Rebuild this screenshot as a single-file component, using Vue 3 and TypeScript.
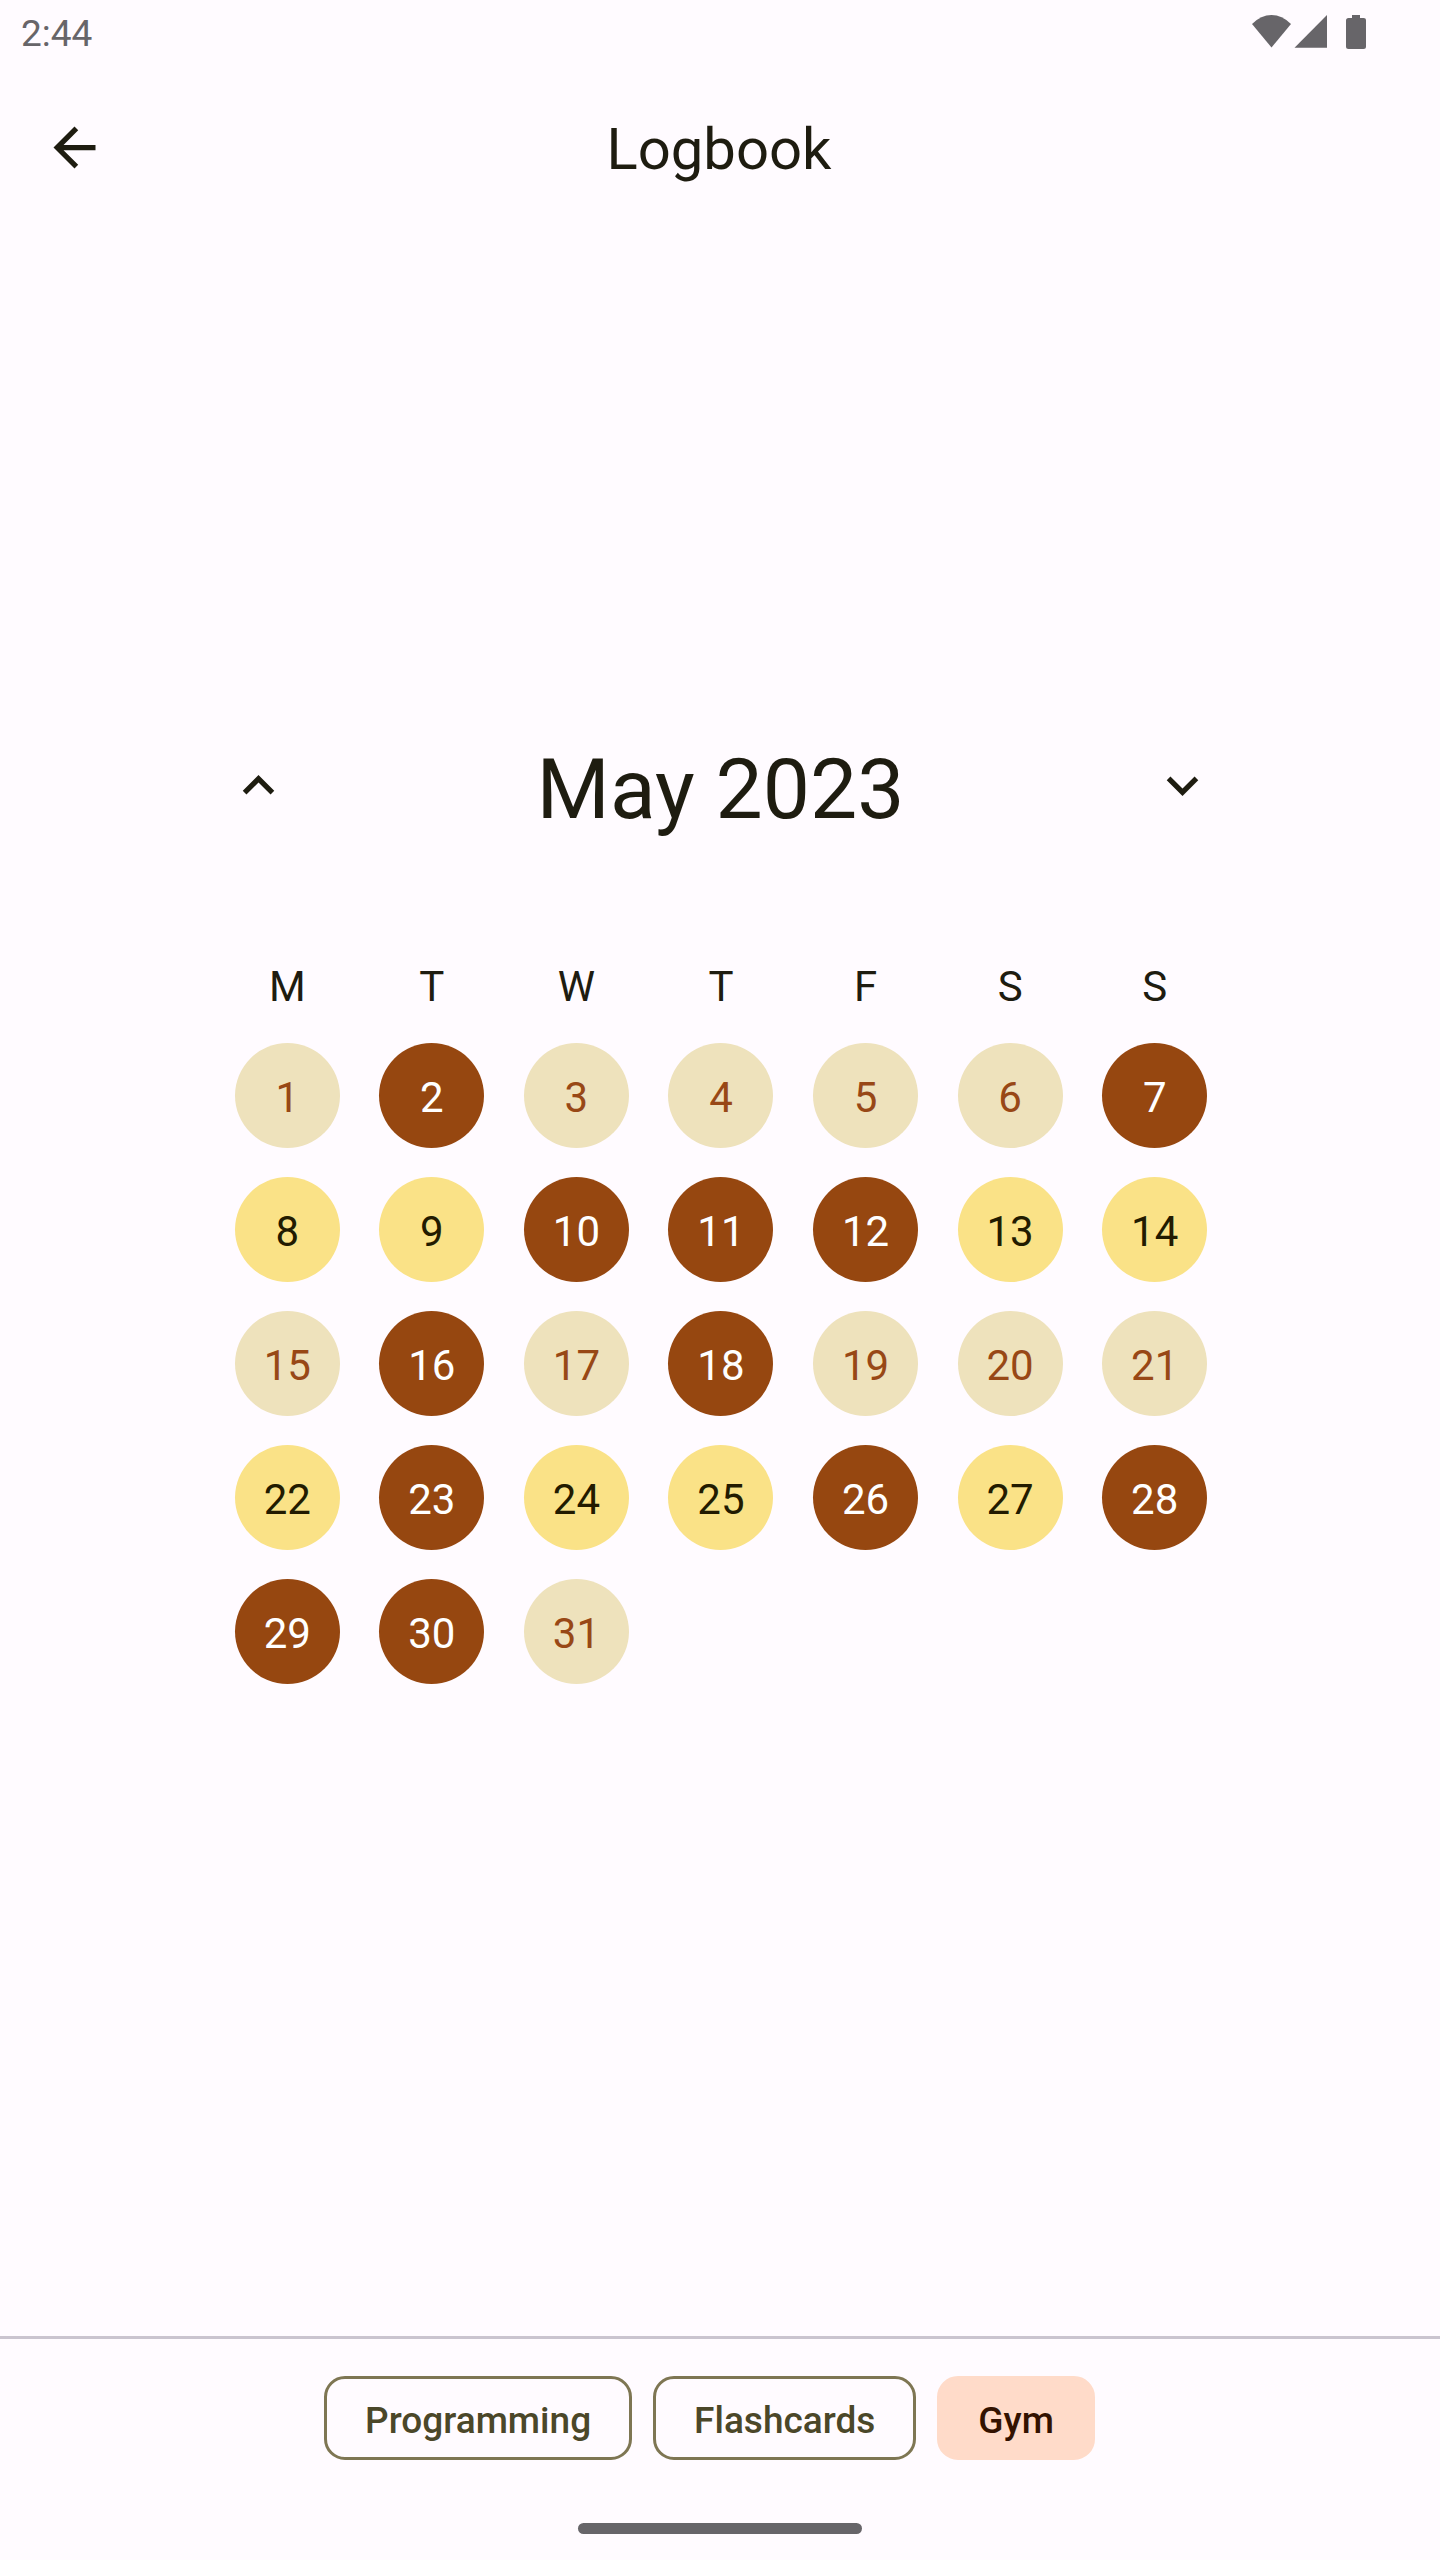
<script setup lang="ts">
import { computed, ref } from 'vue'

type DayState = 'done' | 'met' | 'missed'
interface Day { date: number; state: DayState }

const weekdays = ['M', 'T', 'W', 'T', 'F', 'S', 'S']
const habits = ['Programming', 'Flashcards', 'Gym']
const selected = ref('Gym')
const completed = ref<number[]>([2, 7, 10, 11, 12, 16, 18, 23, 26, 28, 29, 30])
const weeklyGoal = 3

// May 2023 starts on a Monday, so every seven dates form one week.
const weeks = computed<Day[][]>(() => {
  const rows: Day[][] = []
  for (let first = 1; first <= 31; first += 7) {
    const dates = Array.from({ length: Math.min(7, 32 - first) }, (_, i) => first + i)
    const met = dates.filter((d) => completed.value.includes(d)).length >= weeklyGoal
    rows.push(
      dates.map((date) => ({
        date,
        state: completed.value.includes(date) ? 'done' : met ? 'met' : 'missed',
      })),
    )
  }
  return rows
})

function toggle(date: number) {
  completed.value = completed.value.includes(date)
    ? completed.value.filter((d) => d !== date)
    : [...completed.value, date]
}
</script>

<template>
  <div class="screen">
    <div class="status">
      <span>2:44</span>
      <svg class="status-icons" viewBox="0 0 114 34" aria-hidden="true">
        <path d="M0 9Q9 0 19.500 0T39 9L19.500 32.500Z" />
        <path d="M75 0V32.700H42.500Z" />
        <path d="M100 0h8v3h3.500a2.500 2.500 0 0 1 2.500 2.500v26a2.500 2.500 0 0 1-2.500 2.500h-15a2.500 2.500 0 0 1-2.500-2.500v-26a2.500 2.500 0 0 1 2.500-2.500h3.500z" />
      </svg>
    </div>

    <header class="app-bar">
      <button class="icon-button" type="button" aria-label="Back">
        <svg viewBox="0 0 24 24"><path d="M20 11H7.830l5.590-5.590L12 4l-8 8 8 8 1.410-1.410L7.830 13H20z" /></svg>
      </button>
      <h1 class="title">Logbook</h1>
    </header>

    <main class="calendar">
      <div class="month-bar">
        <button class="icon-button" type="button" aria-label="Previous month">
          <svg viewBox="0 0 24 24"><path d="M7.410 15.410 12 10.830l4.590 4.580L18 14l-6-6-6 6z" /></svg>
        </button>
        <h2 class="month">May 2023</h2>
        <button class="icon-button" type="button" aria-label="Next month">
          <svg viewBox="0 0 24 24"><path d="M7.410 8.590 12 13.170l4.590-4.580L18 10l-6 6-6-6z" /></svg>
        </button>
      </div>
      <table class="days">
        <thead>
          <tr><th v-for="(name, i) in weekdays" :key="i" scope="col">{{ name }}</th></tr>
        </thead>
        <tbody>
          <tr v-for="(week, w) in weeks" :key="w">
            <td v-for="day in week" :key="day.date">
              <button
                class="day"
                :class="day.state"
                type="button"
                :aria-pressed="day.state === 'done'"
                @click="toggle(day.date)"
              >{{ day.date }}</button>
            </td>
          </tr>
        </tbody>
      </table>
    </main>

    <footer class="habits">
      <button
        v-for="habit in habits"
        :key="habit"
        class="chip"
        :class="{ active: habit === selected }"
        type="button"
        :aria-pressed="habit === selected"
        @click="selected = habit"
      >{{ habit }}</button>
    </footer>
    <div class="home-indicator"></div>
  </div>
</template>

<style>
body {
  margin: 0;
  background: #fffbff;
}
</style>

<style scoped>
.screen {
  display: flex;
  flex-direction: column;
  box-sizing: border-box;
  min-height: 100vh;
  padding-bottom: 26px;
  background: #fffbff;
  color: #1e1c10;
  font-family: Roboto, "Liberation Sans", sans-serif;
}

button {
  margin: 0;
  border: 0;
  background: none;
  color: inherit;
  font-family: inherit;
  cursor: pointer;
}

.status {
  display: flex;
  align-items: center;
  justify-content: space-between;
  box-sizing: border-box;
  height: 63px;
  padding: 0 74px 0 21px;
  color: #676569;
  font-size: 37px;
  line-height: 44px;
}

.status span {
  padding-top: 4px;
}

.status-icons {
  width: 114px;
  height: 34px;
  fill: currentColor;
}

.app-bar {
  display: grid;
  grid-template-columns: 126px 1fr 126px;
  align-items: center;
  height: 168px;
  padding: 0 13px 0 11px;
}

.title,
.month {
  margin: 0;
  padding-top: 4px;
  font-weight: 400;
  text-align: center;
}

.title {
  font-size: 58px;
  line-height: 74px;
}

.month {
  padding-top: 8px;
  font-size: 84px;
  line-height: 105px;
}

.icon-button {
  display: flex;
  align-items: center;
  justify-content: center;
  width: 126px;
  height: 126px;
  padding: 0;
}

.icon-button svg {
  width: 63px;
  height: 63px;
  fill: currentColor;
}

.calendar {
  display: flex;
  flex: 1;
  flex-direction: column;
  justify-content: center;
  padding-bottom: 146px;
}

.month-bar {
  display: flex;
  align-items: center;
  justify-content: space-between;
  padding: 0 194px 0 195px;
}

.days {
  align-self: stretch;
  margin: 96px 213px 0 215px;
  border-collapse: collapse;
  table-layout: fixed;
  font-size: 42px;
}

.days th {
  height: 84px;
  padding: 0;
  font-weight: 400;
  text-align: center;
}

.days td {
  height: 134px;
  padding: 0;
}

.day {
  display: block;
  box-sizing: border-box;
  width: 105px;
  height: 105px;
  margin: 0 auto;
  padding: 3px 0 0;
  border-radius: 50%;
  font-size: 42px;
}

.done {
  background: #964710;
  color: #ffffff;
}

.met {
  background: #fae287;
  color: #221b00;
}

.missed {
  background: #eee2bc;
  color: #984816;
}

.habits {
  display: flex;
  justify-content: center;
  gap: 21px;
  padding: 37px 21px 63px 0;
  border-top: 3px solid #cac4cf;
}

.chip {
  box-sizing: border-box;
  height: 84px;
  padding: 4px 38px 0;
  border: 3px solid #7e7653;
  border-radius: 21px;
  color: #4b4729;
  font-size: 37px;
  font-weight: 500;
}

.chip.active {
  border-color: #ffdbc9;
  background: #ffdbc9;
  color: #331200;
}

.home-indicator {
  align-self: center;
  width: 284px;
  height: 11px;
  border-radius: 6px;
  background: #676569;
}
</style>
